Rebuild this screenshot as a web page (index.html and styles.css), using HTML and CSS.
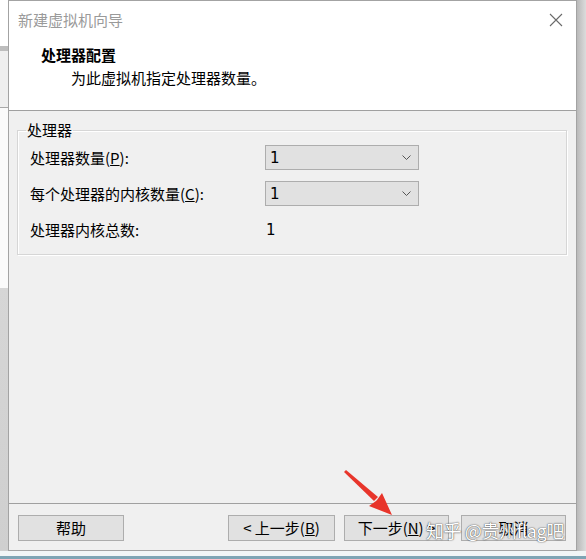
FILE: index.html
```html
<!DOCTYPE html>
<html lang="zh-CN">
<head>
<meta charset="utf-8">
<title>新建虚拟机向导</title>
<link rel="stylesheet" href="styles.css">
</head>
<body>
<div class="screen">
  <div class="row-main">
    <div class="strip-left"></div>
    <div class="dialog">
      <div class="top">
        <div class="titlebar">
          <span class="title">新建虚拟机向导</span>
          <span class="close">
            <svg width="14" height="14" viewBox="0 0 14 14"><path d="M1 1 L13 13 M13 1 L1 13" stroke="#6a6a6a" stroke-width="1.1" fill="none"/></svg>
          </span>
        </div>
        <div class="heading">处理器配置</div>
        <div class="subtitle">为此虚拟机指定处理器数量。</div>
      </div>
      <div class="body">
        <fieldset class="group">
          <legend>处理器</legend>
          <div class="form">
            <label class="lbl">处理器数量(<u>P</u>):</label>
            <div class="select"><span class="val">1</span><svg class="chev" width="9" height="5" viewBox="0 0 9 5"><path d="M0.5 0.5 L4.5 4.5 L8.5 0.5" stroke="#555" stroke-width="1" fill="none"/></svg></div>
            <label class="lbl">每个处理器的内核数量(<u>C</u>):</label>
            <div class="select"><span class="val">1</span><svg class="chev" width="9" height="5" viewBox="0 0 9 5"><path d="M0.5 0.5 L4.5 4.5 L8.5 0.5" stroke="#555" stroke-width="1" fill="none"/></svg></div>
            <span class="lbl">处理器内核总数:</span>
            <span class="val total">1</span>
          </div>
        </fieldset>
      </div>
      <div class="footer">
        <button class="btn help">帮助</button>
        <button class="btn back">&lt; 上一步(<u>B</u>)</button>
        <button class="btn next">下一步(<u>N</u>) &gt;</button>
        <button class="btn cancel">取消</button>
      </div>
    </div>
    <div class="strip-right"></div>
  </div>
  <div class="strip-bottom"></div>
  <svg class="arrow" width="60" height="56" viewBox="0 0 60 56">
    <polygon points="4,6 6,4 38,31 34,35" fill="#e8352b"/>
    <polygon points="52,49 29,40 36,35 37,34 42,27" fill="#e8352b"/>
  </svg>
  <div class="watermark">知乎 @贵州flag吧</div>
</div>
</body>
</html>
```
FILE: styles.css
```css
html, body {
  margin: 0;
  padding: 0;
}
body {
  width: 586px;
  height: 559px;
  overflow: hidden;
  font-family: "Noto Sans CJK SC", "Noto Sans", sans-serif;
  font-size: 15px;
  color: #000;
  background: #e9eef0;
}
.screen {
  position: relative;
  width: 586px;
  height: 559px;
  display: flex;
  flex-direction: column;
}
.row-main {
  display: flex;
  height: 551px;
}
.strip-left {
  width: 8px;
  background: linear-gradient(#ffffff 0, #ffffff 46px, #bdbdbd 46px, #bdbdbd 51px, #efefef 51px, #efefef 107px, #a8a8a8 107px, #a8a8a8 108px, #fafafa 108px, #fafafa 288px, #d6d6d6 288px, #cfcfcf 551px);
}
.strip-right {
  width: 9px;
  background: linear-gradient(90deg, #b9b9b9 0, #dcdcdc 100%);
}
.strip-bottom {
  flex: 1;
  background: linear-gradient(#f2f5f6 0, #f2f5f6 5px, #7ea4b4 5px, #7ea4b4 8px);
}
.dialog {
  width: 569px;
  box-sizing: border-box;
  border: 1px solid #a3a3a3;
  background: #f0f0f0;
  display: flex;
  flex-direction: column;
}
.top {
  background: #fff;
  height: 109px;
  border-bottom: 1px solid #a0a0a0;
}
.titlebar {
  height: 37px;
  display: flex;
  align-items: center;
  justify-content: space-between;
  padding-left: 9px;
  padding-right: 13px;
}
.title {
  color: #9a9a9a;
  font-size: 15px;
}
.close {
  display: flex;
  width: 14px;
  height: 14px;
}
.heading {
  margin-top: 7px;
  padding-left: 32px;
  font-weight: bold;
  line-height: 20px;
}
.subtitle {
  margin-top: 3px;
  padding-left: 62px;
  line-height: 20px;
}
.body {
  flex: 1;
  padding: 9px 9px 0 8px;
}
.group {
  margin: 0;
  padding: 5px 12px 12px 12px;
  border: 1px solid #d6d6d6;
  box-shadow: inset 1px 1px 0 #fff, 1px 1px 0 #fff;
}
.group legend {
  padding: 0 1px;
  margin-left: -4px;
  line-height: 20px;
}
.form {
  display: grid;
  grid-template-columns: 235px 154px;
  grid-auto-rows: 25px;
  row-gap: 11px;
  align-items: center;
}
.lbl {
  line-height: 25px;
}
.select {
  height: 25px;
  box-sizing: border-box;
  border: 1px solid #adadad;
  background: #e1e1e1;
  display: flex;
  align-items: center;
  justify-content: space-between;
  padding: 0 7px 0 4px;
}
.val {
  font-family: "DejaVu Sans", sans-serif;
  font-size: 15px;
}
.total {
  padding-left: 1px;
}
.footer {
  border-top: 1px solid #a0a0a0;
  height: 47px;
  box-sizing: border-box;
  padding-top: 11px;
  display: flex;
  align-items: flex-start;
}
.btn {
  height: 26px;
  box-sizing: border-box;
  border: 1px solid #adadad;
  background: #e1e1e1;
  font-family: inherit;
  font-size: 15px;
  color: #000;
  padding: 0;
  line-height: 22px;
}
.help {
  margin-left: 9px;
  width: 106px;
}
.back {
  margin-left: auto;
  width: 107px;
}
.next {
  margin-left: 9px;
  width: 105px;
}
.cancel {
  margin-left: 12px;
  width: 105px;
  margin-right: 10px;
}
.arrow {
  position: absolute;
  left: 340px;
  top: 466px;
}
.watermark {
  position: absolute;
  left: 426px;
  top: 517px;
  font-size: 18px;
  line-height: 26px;
  color: #ffffff;
  text-shadow: 0 0 1px rgba(0, 0, 0, 0.7), 0 0 2px rgba(0, 0, 0, 0.45);
  letter-spacing: -0.4px;
}
```
